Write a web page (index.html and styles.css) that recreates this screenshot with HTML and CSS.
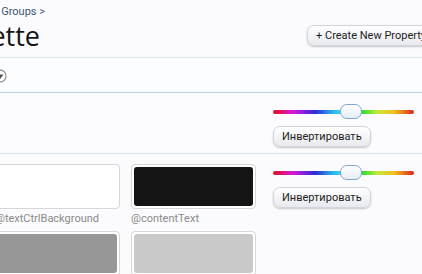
FILE: index.html
```html
<!DOCTYPE html>
<html>
<head>
<meta charset="utf-8">
<link rel="stylesheet" href="styles.css">
</head>
<body>
<div class="page">
  <header class="titlebar">
    <nav class="crumbs"><span class="crumb-text">Appearance &gt; Styles &gt; Default Style &gt; Groups &gt;</span></nav>
    <div class="title-row">
      <div class="title-slot"><h1 class="title">Style Palette</h1></div>
      <a class="button create">+ Create New Property</a>
    </div>
  </header>

  <div class="filter-bar">
    <span class="filter-icon">
      <svg width="14" height="14" viewBox="0 0 14 14"><circle cx="7" cy="7" r="6" fill="#fff" stroke="#9a9a9a" stroke-width="1.3"/><path d="M4 5.5 L10.5 5.5 L7.2 10 Z" fill="#555"/></svg>
    </span>
  </div>

  <section class="group group-first">
    <div class="swatch-area"></div>
    <div class="controls">
      <div class="slider"><div class="track"></div><div class="thumb"></div></div>
      <a class="button invert">Инвертировать</a>
    </div>
  </section>

  <section class="group">
    <div class="swatch-area">
      <div class="swatches">
        <div class="swatch-item">
          <div class="swatch"><div class="fill fill-white"></div></div>
          <div class="label">@textCtrlBackground</div>
        </div>
        <div class="swatch-item">
          <div class="swatch"><div class="fill fill-black"></div></div>
          <div class="label">@contentText</div>
        </div>
        <div class="swatch-item">
          <div class="swatch"><div class="fill fill-gray"></div></div>
          <div class="label">@mutedTextColor</div>
        </div>
        <div class="swatch-item">
          <div class="swatch"><div class="fill fill-light"></div></div>
          <div class="label">@faintTextColor</div>
        </div>
      </div>
    </div>
    <div class="controls">
      <div class="slider"><div class="track"></div><div class="thumb"></div></div>
      <a class="button invert">Инвертировать</a>
    </div>
  </section>
</div>
</body>
</html>
```

FILE: styles.css
```css
html, body {
  margin: 0;
  padding: 0;
}
body {
  background: #fbfbfd;
  font-family: Roboto, "Open Sans", sans-serif;
  color: #222;
  overflow: hidden;
  width: 422px;
  height: 274px;
}
.page {
  width: 422px;
}
.titlebar {
  border-bottom: 1px solid #d6e9ee;
  height: 58px;
  box-sizing: border-box;
}
.crumbs {
  display: flex;
  justify-content: flex-end;
  width: 45px;
  padding-top: 5px;
  height: 14px;
  font-size: 11px;
  line-height: 14px;
  color: #3b5870;
  white-space: nowrap;
}
.title-row {
  display: flex;
  align-items: flex-start;
}
.title-slot {
  flex: 0 0 307px;
}
.title {
  margin: 0;
  width: 40px;
  display: flex;
  justify-content: flex-end;
  white-space: nowrap;
  font-family: "Open Sans", sans-serif;
  font-size: 27px;
  font-weight: normal;
  line-height: 34px;
  color: #161616;
}
.button {
  display: inline-block;
  box-sizing: border-box;
  height: 21px;
  line-height: 19px;
  padding: 0 8px;
  font-size: 11px;
  color: #1e1e1e;
  white-space: nowrap;
  background: linear-gradient(#ffffff, #e8e9ee);
  border: 1px solid #d3d5dc;
  border-radius: 7px;
  box-shadow: 0 1px 2px rgba(0, 0, 0, 0.22);
}
.create {
  margin-top: 6px;
  flex: 0 0 auto;
}
.filter-bar {
  height: 34px;
  border-bottom: 1px solid #b7d6e3;
  background: #fcfdff;
  display: flex;
  align-items: center;
}
.filter-icon {
  display: flex;
  margin-left: -7px;
  margin-top: 1px;
}
.group {
  display: flex;
}
.group-first {
  border-bottom: 1px solid #d3e7ee;
  background: #fcfcff;
}
.swatch-area {
  flex: 0 0 273px;
}
.swatches {
  margin-left: -5px;
  padding-top: 10px;
  display: grid;
  grid-template-columns: 125px 125px;
  column-gap: 11px;
  row-gap: 4px;
}
.swatch {
  box-sizing: border-box;
  height: 45px;
  padding: 2px;
  border: 1px solid #d6d6d6;
  border-radius: 4px;
  background: #fff;
}
.fill {
  height: 100%;
  border-radius: 3px;
}
.fill-white { background: #ffffff; }
.fill-black { background: #141414; }
.fill-gray { background: #979797; }
.fill-light { background: #c9c9c9; }
.label {
  margin-top: 2px;
  font-size: 11px;
  line-height: 16px;
  color: #8a8a8a;
  white-space: nowrap;
}
.controls {
  width: 141px;
  padding: 10px 0 6px;
  display: flex;
  flex-direction: column;
  align-items: flex-start;
  gap: 6px;
}
.slider {
  position: relative;
  width: 141px;
  height: 17px;
  display: flex;
  align-items: center;
}
.track {
  width: 100%;
  height: 4px;
  border-radius: 2px;
  background: linear-gradient(to right, #e0101a 0%, #d818d8 14%, #2a2ad8 30%, #2ab0e8 42%, #30d0f0 47%, #30e030 64%, #c8e838 74%, #f0c020 86%, #e02020 100%);
}
.thumb {
  position: absolute;
  left: 67px;
  top: 1px;
  width: 22px;
  height: 15px;
  box-sizing: border-box;
  border: 1px solid #80a8cc;
  border-radius: 7px;
  background: linear-gradient(#ffffff, #e6edf5);
}
.invert {
  font-size: 11px;
}
```
